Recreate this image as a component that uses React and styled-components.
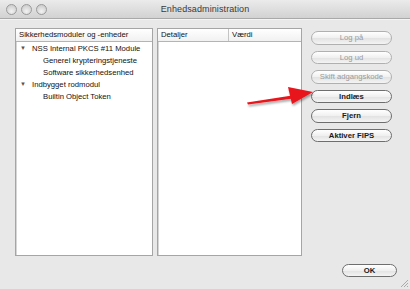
import React from 'react'
import styled, { createGlobalStyle } from 'styled-components'

const Global = createGlobalStyle`
  html, body {
    margin: 0;
    padding: 0;
    background: #e8e8e8;
  }
  body {
    font-family: "Liberation Sans", Arial, sans-serif;
    font-size: 7.7px;
    color: #111;
  }
`

const Window = styled.div`
  position: relative;
  width: 410px;
  height: 289px;
  display: flex;
  flex-direction: column;
  background: #e8e8e8;
  overflow: hidden;
`

const TitleBar = styled.div`
  height: 18px;
  display: flex;
  align-items: center;
  position: relative;
  background: linear-gradient(#ebebeb, #d2d2d2);
  border-bottom: 1px solid #a9a9a9;
  box-shadow: 0 1px 0 #f4f4f4;
`

const Lights = styled.div`
  display: flex;
  gap: 4px;
  padding-left: 6px;
`

const Light = styled.span`
  width: 11px;
  height: 11px;
  border-radius: 50%;
  box-sizing: border-box;
  border: 1px solid #9a9a9a;
  background: radial-gradient(circle at 50% 70%, #f2f2f2, #c4c4c4);
`

const Title = styled.div`
  position: absolute;
  left: 0;
  right: 0;
  text-align: center;
  font-size: 9px;
  color: #3a3a3a;
  letter-spacing: 0.1px;
`

const Body = styled.div`
  flex: 1;
  display: flex;
  padding: 9px 17px 0 15px;
  gap: 9px;
`

const Lists = styled.div`
  display: flex;
  gap: 4px;
  height: 228px;
`

const Panel = styled.div`
  width: ${({ $w }) => $w}px;
  background: #fff;
  border: 1px solid #a5a5a5;
  box-shadow: inset 1px 0 0 #d6d6d6;
  display: flex;
  flex-direction: column;
`

const HeaderRow = styled.div`
  display: flex;
  height: 12px;
  border-bottom: 1px solid #b4b4b4;
  background: linear-gradient(#ffffff, #f1f1f1);
`

const HeaderCell = styled.div`
  width: ${({ $w }) => ($w ? `${$w}px` : 'auto')};
  flex: ${({ $w }) => ($w ? 'none' : '1')};
  padding-left: 3px;
  line-height: 12px;
  border-right: ${({ $divider }) => ($divider ? '1px solid #c4c4c4' : 'none')};
  color: #111;
`

const TreeRow = styled.div`
  display: flex;
  align-items: center;
  height: 12px;
  padding-left: ${({ $depth }) => 4 + $depth * 23}px;
  white-space: nowrap;
`

const Toggle = styled.span`
  width: 12px;
  font-size: 6px;
  color: #555;
`

const Buttons = styled.div`
  display: flex;
  flex-direction: column;
  gap: 6px;
  padding-top: 3px;
`

const Button = styled.button`
  width: ${({ $w }) => $w || 81}px;
  height: 13.5px;
  padding: 0;
  border-radius: 7px;
  border: 1px solid ${({ disabled }) => (disabled ? '#b0b0b0' : '#6e6e6e')};
  background: linear-gradient(#ffffff, #f0f0f0 50%, #e2e2e2 51%, #f4f4f4);
  font-family: "Liberation Sans", Arial, sans-serif;
  font-size: 7.7px;
  font-weight: ${({ disabled }) => (disabled ? 'normal' : 'bold')};
  color: ${({ disabled }) => (disabled ? '#9a9a9a' : '#1a1a1a')};
  line-height: 11px;
`

const Footer = styled.div`
  display: flex;
  justify-content: flex-end;
  padding: 0 13px 12px 0;
`

const Arrow = styled.svg`
  position: absolute;
  left: 240px;
  top: 82px;
`

const Grip = styled.svg`
  position: absolute;
  right: 1px;
  bottom: 1px;
`

const tree = [
  { depth: 0, open: true, label: 'NSS Internal PKCS #11 Module' },
  { depth: 1, label: 'Generel krypteringstjeneste' },
  { depth: 1, label: 'Software sikkerhedsenhed' },
  { depth: 0, open: true, label: 'Indbygget rodmodul' },
  { depth: 1, label: 'Builtin Object Token' },
]

const actions = [
  { label: 'Log på', disabled: true },
  { label: 'Log ud', disabled: true },
  { label: 'Skift adgangskode', disabled: true },
  { label: 'Indlæs' },
  { label: 'Fjern' },
  { label: 'Aktiver FIPS' },
]

export default function App() {
  return (
    <Window>
      <Global />
      <TitleBar>
        <Lights>
          <Light />
          <Light />
          <Light />
        </Lights>
        <Title>Enhedsadministration</Title>
      </TitleBar>
      <Body>
        <Lists>
          <Panel $w={136}>
            <HeaderRow>
              <HeaderCell>Sikkerhedsmoduler og -enheder</HeaderCell>
            </HeaderRow>
            <div>
              {tree.map((row) => (
                <TreeRow key={row.label} $depth={row.depth}>
                  {row.depth === 0 && <Toggle>{row.open ? '▼' : '▶'}</Toggle>}
                  {row.label}
                </TreeRow>
              ))}
            </div>
          </Panel>
          <Panel $w={143}>
            <HeaderRow>
              <HeaderCell $w={67} $divider>Detaljer</HeaderCell>
              <HeaderCell>Værdi</HeaderCell>
            </HeaderRow>
          </Panel>
        </Lists>
        <Buttons>
          {actions.map((a) => (
            <Button key={a.label} disabled={a.disabled}>
              {a.label}
            </Button>
          ))}
        </Buttons>
      </Body>
      <Footer>
        <Button $w={55}>OK</Button>
      </Footer>
      <Arrow width="80" height="30" viewBox="0 0 80 30">
        <defs>
          <filter id="sh" x="-20%" y="-50%" width="140%" height="200%">
            <feDropShadow dx="1" dy="2" stdDeviation="1.2" floodColor="#000" floodOpacity="0.35" />
          </filter>
        </defs>
        <g filter="url(#sh)" fill="#e8141a">
          <path d="M7 20.5 L52 13.5 L53 16.5 L8 22.5 Z" />
          <path d="M48 5 L73 10 L52 22 Z" />
        </g>
      </Arrow>
      <Grip width="10" height="10" viewBox="0 0 10 10">
        <path d="M2 9 L9 2 M5 9 L9 5 M8 9 L9 8" stroke="#999" strokeWidth="0.8" />
      </Grip>
    </Window>
  )
}
